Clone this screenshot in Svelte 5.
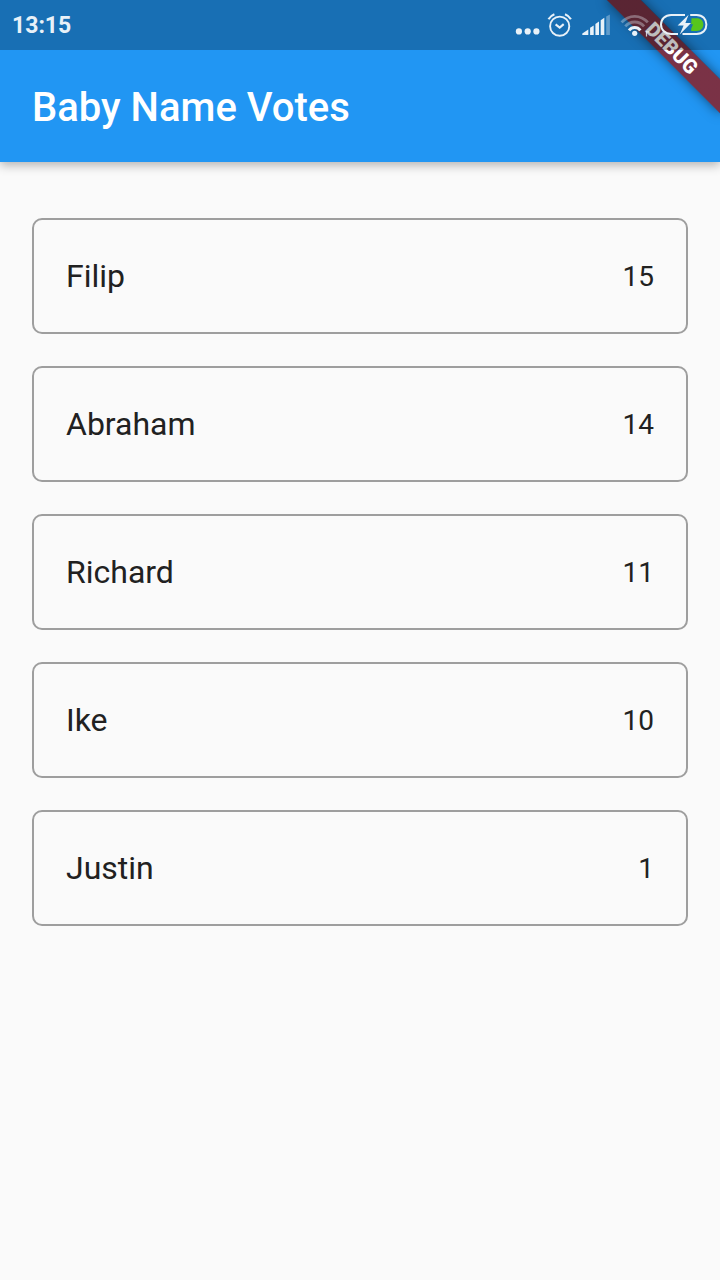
<script>
  const names = [
    { name: 'Filip', votes: 15 },
    { name: 'Abraham', votes: 14 },
    { name: 'Richard', votes: 11 },
    { name: 'Ike', votes: 10 },
    { name: 'Justin', votes: 1 }
  ];
</script>

<div class="app">
  <header>
    <div class="status">
      <time>13:15</time>
      <div class="icons">
        <svg width="24" height="24" viewBox="0 0 24 24" aria-hidden="true">
          <g fill="currentColor">
            <circle cx="2.9" cy="18.4" r="3.1" />
            <circle cx="11.7" cy="18.4" r="3.1" />
            <circle cx="20.4" cy="18.4" r="3.1" />
          </g>
        </svg>
        <svg width="24" height="24" viewBox="0 0 24 24" aria-hidden="true">
          <g fill="none" stroke="currentColor" stroke-width="1.9">
            <circle cx="11.7" cy="13.2" r="9.6" />
            <path d="M7.6 11.4l4.1 3.2 4-3.5" stroke-width="2.1" />
            <path d="M.5 6.3Q2.6 2.8 6.4 1.3M17 1.3Q20.8 2.8 22.9 6.3" stroke-width="2.2" />
          </g>
        </svg>
        <svg width="32" height="24" viewBox="0 0 32 24" aria-hidden="true">
          <g fill="currentColor">
            <path d="M2.3 22v-1.6L8.3 16.4V22z" />
            <path d="M10.1 22v-7.2l3.6-2.4V22z" />
            <path d="M15.4 22V11l3.6-2.4V22z" />
            <path d="M20.7 22V7.2l3.6-2.4V22z" />
            <path d="M26.2 22V3.4L29.9 1.6V22z" opacity=".35" />
          </g>
        </svg>
        <svg width="32" height="24" viewBox="0 0 32 24" aria-hidden="true">
          <g fill="none" stroke="currentColor" stroke-width="2.8">
            <path d="M1.6 9.4Q7 3.3 14.7 3.3T27.8 9.4" opacity=".35" />
            <path d="M5.3 13.4Q9 9 14.7 9T24.1 13.4" opacity=".35" />
            <path d="M9 17.4Q11.3 14.6 14.7 14.6T20.4 17.4" stroke-width="3" />
          </g>
          <circle cx="14.7" cy="20.3" r="2.6" fill="currentColor" />
          <path d="M26.5 18v5.4M26.5 18.8h2.5" fill="none" stroke="currentColor" stroke-width="1.2" opacity=".8" />
        </svg>
        <svg width="48" height="24" viewBox="0 0 48 24" aria-hidden="true">
          <g fill="none" stroke="currentColor" stroke-width="2">
            <path d="M25 2H11.2C5 2 1 6.3 1 11.6S5 21 11.2 21H18" />
            <path d="M30.2 2H36.6C42.8 2 46.4 6.3 46.4 11.6S42.8 21 36.6 21H22.5" />
          </g>
          <path d="M28.6 1.8L17.6 12.6h6L19.8 21.6 31 10h-5.6z" fill="currentColor" />
          <path d="M31.5 5.3h5C41 5.3 43.4 8 43.4 11.6S41 18 36.5 18h-5.3v-2.2l1.8-4.6h-1.8z" fill="#57c51d" />
        </svg>
      </div>
    </div>
    <h1>Baby Name Votes</h1>
  </header>

  <main>
    <ul>
      {#each names as item (item.name)}
        <li>
          <button type="button">
            <span class="name">{item.name}</span>
            <span class="votes">{item.votes}</span>
          </button>
        </li>
      {/each}
    </ul>
  </main>

  <div class="ribbon">DEBUG</div>
</div>

<style>
  :global(body) {
    background: #fafafa;
  }
  .app {
    position: relative;
    min-height: 100vh;
    overflow: hidden;
    background: #fafafa;
    color: #212121;
    font-family: Roboto, sans-serif;
  }
  header {
    background: #2196f3;
    color: #fff;
    box-shadow: 0 3px 10px rgba(0, 0, 0, 0.3);
  }
  .status {
    position: relative;
    z-index: 2;
    display: flex;
    align-items: center;
    justify-content: space-between;
    height: 50px;
    padding: 0 12px;
    background: rgba(0, 0, 0, 0.26);
    color: #e8f1f8;
  }
  time {
    padding-top: 2px;
    font-size: 23px;
    font-weight: 700;
    line-height: 28px;
  }
  .icons {
    display: flex;
    gap: 8px;
  }
  svg {
    display: block;
    overflow: visible;
  }
  h1 {
    margin: 0;
    padding: 34px 32px 30px;
    font-size: 40px;
    font-weight: 500;
    line-height: 48px;
  }
  main {
    padding: 56px 32px 32px;
  }
  ul {
    display: flex;
    flex-direction: column;
    gap: 32px;
    margin: 0;
    padding: 0;
    list-style: none;
  }
  button {
    display: flex;
    align-items: center;
    justify-content: space-between;
    width: 100%;
    padding: 36px 32px;
    border: 2px solid #9e9e9e;
    border-radius: 10px;
    background: transparent;
    color: inherit;
    font-family: inherit;
    line-height: 40px;
    text-align: left;
  }
  .name {
    font-size: 32px;
  }
  .votes {
    padding-top: 2px;
    font-size: 28px;
    line-height: 36px;
  }
  .ribbon {
    position: absolute;
    z-index: 1;
    top: 56px;
    right: -80px;
    width: 160px;
    height: 24px;
    background:
      linear-gradient(rgba(183, 28, 28, 0.627), rgba(183, 28, 28, 0.627)),
      rgba(0, 0, 0, 0.42);
    box-shadow: 0 0 12px rgba(0, 0, 0, 0.5);
    color: #fff;
    font-size: 20px;
    font-weight: 900;
    line-height: 24px;
    text-align: center;
    transform: rotate(45deg);
    transform-origin: 50% -56px;
  }
</style>
